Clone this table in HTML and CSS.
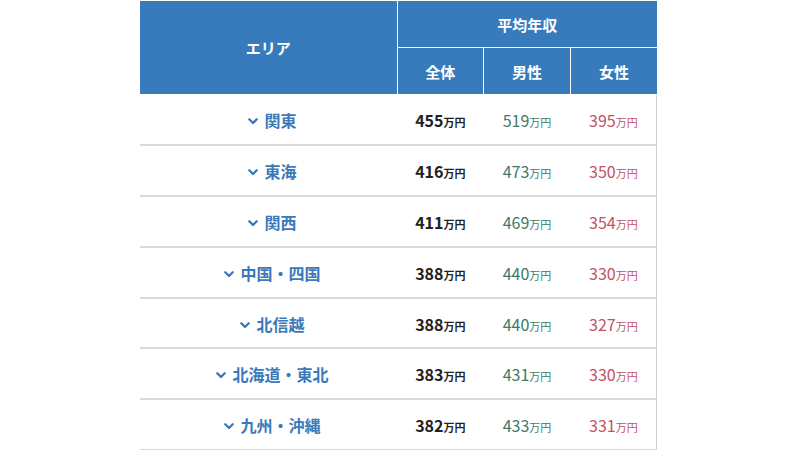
FILE: index.html
```html
<!DOCTYPE html>
<html lang="ja">
<head>
<meta charset="utf-8">
<link rel="stylesheet" href="styles.css">
</head>
<body>
<div class="wrap">
<table class="salary">
  <colgroup>
    <col class="c-area"><col class="c-num"><col class="c-num"><col class="c-num">
  </colgroup>
  <thead>
    <tr class="h1">
      <th rowspan="2" class="area-h">エリア</th>
      <th colspan="3">平均年収</th>
    </tr>
    <tr class="h2">
      <th>全体</th><th>男性</th><th>女性</th>
    </tr>
  </thead>
  <tbody>
    <tr><td class="area"><span class="chev"><svg viewBox="0 0 10 7" width="10" height="7"><polyline points="1.3,1.3 5,5 8.7,1.3" /></svg></span>関東</td><td class="all">455<small>万円</small></td><td class="male">519<small>万円</small></td><td class="female">395<small>万円</small></td></tr>
    <tr><td class="area"><span class="chev"><svg viewBox="0 0 10 7" width="10" height="7"><polyline points="1.3,1.3 5,5 8.7,1.3" /></svg></span>東海</td><td class="all">416<small>万円</small></td><td class="male">473<small>万円</small></td><td class="female">350<small>万円</small></td></tr>
    <tr><td class="area"><span class="chev"><svg viewBox="0 0 10 7" width="10" height="7"><polyline points="1.3,1.3 5,5 8.7,1.3" /></svg></span>関西</td><td class="all">411<small>万円</small></td><td class="male">469<small>万円</small></td><td class="female">354<small>万円</small></td></tr>
    <tr><td class="area"><span class="chev"><svg viewBox="0 0 10 7" width="10" height="7"><polyline points="1.3,1.3 5,5 8.7,1.3" /></svg></span>中国・四国</td><td class="all">388<small>万円</small></td><td class="male">440<small>万円</small></td><td class="female">330<small>万円</small></td></tr>
    <tr><td class="area"><span class="chev"><svg viewBox="0 0 10 7" width="10" height="7"><polyline points="1.3,1.3 5,5 8.7,1.3" /></svg></span>北信越</td><td class="all">388<small>万円</small></td><td class="male">440<small>万円</small></td><td class="female">327<small>万円</small></td></tr>
    <tr><td class="area"><span class="chev"><svg viewBox="0 0 10 7" width="10" height="7"><polyline points="1.3,1.3 5,5 8.7,1.3" /></svg></span>北海道・東北</td><td class="all">383<small>万円</small></td><td class="male">431<small>万円</small></td><td class="female">330<small>万円</small></td></tr>
    <tr><td class="area"><span class="chev"><svg viewBox="0 0 10 7" width="10" height="7"><polyline points="1.3,1.3 5,5 8.7,1.3" /></svg></span>九州・沖縄</td><td class="all">382<small>万円</small></td><td class="male">433<small>万円</small></td><td class="female">331<small>万円</small></td></tr>
  </tbody>
</table>
</div>
</body>
</html>
```
FILE: styles.css
```css
html, body {
  margin: 0;
  padding: 0;
  background: #ffffff;
}
body {
  font-family: "Noto Sans CJK JP", "Noto Sans", sans-serif;
}
.wrap {
  padding: 1px 0 0 140px;
}
.salary {
  width: 517px;
  border-collapse: collapse;
  table-layout: fixed;
}
.c-area { width: 257px; }
.c-num { width: 86.67px; }

.salary th {
  background: #387bbd;
  color: #ffffff;
  font-weight: 700;
  font-size: 15px;
  border: 1px solid #ffffff;
  padding: 0;
}
.salary thead tr:first-child th { border-top: 0; }
.salary th.area-h { border-left: 0; }
.salary thead tr th:last-child { border-right: 0; }
.h1 th { height: 46px; }
.h2 th { height: 46px; }

.salary td {
  height: 47.9px;
  padding: 1px 0 0;
  text-align: center;
  border-bottom: 2px solid #d9d9d9;
  font-size: 16px;
}
.salary td:last-child {
  border-right: 1px solid #cfcfcf;
}
.salary td.area {
  color: #3a79ba;
  font-weight: 700;
  padding-left: 8px;
}
.chev {
  display: inline-block;
  margin-right: 6px;
  vertical-align: 2px;
}
.chev svg {
  display: block;
  fill: none;
  stroke: #3a79ba;
  stroke-width: 2.3;
  stroke-linecap: round;
  stroke-linejoin: round;
}
.all {
  color: #222222;
  font-weight: 700;
}
.male {
  color: #3c7a6a;
}
.female {
  color: #c2525f;
}
.salary td small {
  font-size: 11px;
}
.all small { font-weight: 700; }
```
